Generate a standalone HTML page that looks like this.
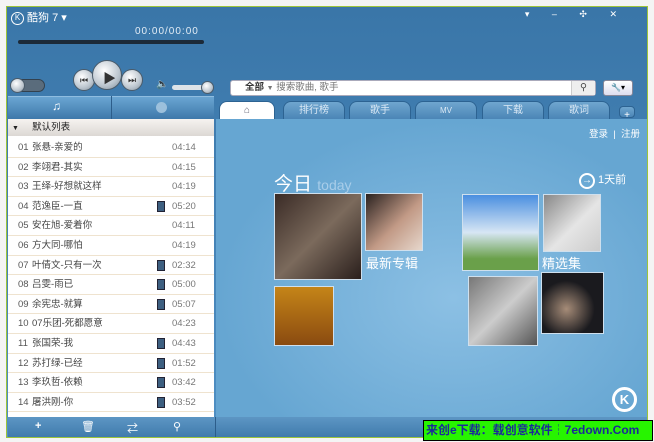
<!DOCTYPE html>
<html><head><meta charset="utf-8"><style>
*{margin:0;padding:0;box-sizing:border-box}
body{width:654px;height:442px;background:#f4f4f4;position:relative;overflow:hidden;font-family:"Liberation Sans","Noto Sans CJK SC",sans-serif;font-size:10px}
.abs{position:absolute}
#win{left:6px;top:6px;width:642px;height:432px;border:1px solid #9cc43c;background:linear-gradient(#3a76a8,#4684b8 60%,#5090c4);overflow:hidden}
.list{left:1px;top:112px;width:206px;height:298px;background:#fff}
.row{position:absolute;left:0;width:206px;height:19.6px;border-bottom:1px solid #efe3cf;color:#444;font-size:9.5px;line-height:19px}
.row .n{position:absolute;left:10px;color:#555}
.row .t{position:absolute;left:24px}
.row .d{position:absolute;left:164px;color:#777}
.row .m{position:absolute;left:149px;top:4px;width:8px;height:11px;background:#3d5f80;border:1px solid #223}
.content{left:209px;top:112px;width:432px;height:298px;background:radial-gradient(ellipse at 55% 60%,#8cc0e4,#66a6d2 70%)}
.tab{position:absolute;top:94px;height:18px;background:linear-gradient(#6fa6cf,#4b85b6);border:1px solid #2d6392;border-bottom:none;border-radius:8px 8px 0 0;color:#dbe9f5;text-align:center;line-height:17px;font-size:10px}
.pic{position:absolute;border:1px solid #cfe0ee}
.bot{left:1px;top:410px;width:640px;height:22px;background:linear-gradient(#5d96c4,#3d78aa)}
.btn{position:absolute;border-radius:50%;background:radial-gradient(circle at 40% 35%,#fff,#bcc6cf 60%,#7e8b97);border:1px solid #4a5b6a}
.bi{position:absolute;top:413px;color:#fff;font-size:11px}
</style></head><body>
<div id="win" class="abs">
 <div class="abs" style="left:4px;top:2px;width:58px;height:16px;color:#fff;font-size:11px"><span style="display:inline-block;width:13px;height:13px;border:1.5px solid #fff;border-radius:50%;font-size:8px;text-align:center;line-height:10px;vertical-align:middle">K</span> 酷狗 7 ▾</div>
 <div class="abs" style="left:128px;top:19px;color:#e2ecf5;font-size:10px;letter-spacing:1px">00:00/00:00</div>
 <div class="abs" style="left:11px;top:33px;width:186px;height:4px;background:#1c2a38;border-radius:2px"></div>
 <div class="abs" style="right:20px;top:2px;color:#fff;font-size:9px;letter-spacing:10px">▾ – ✣ ✕</div>
 <div class="btn" style="left:66px;top:62px;width:22px;height:22px"></div>
 <div class="btn" style="left:85px;top:53px;width:30px;height:30px"></div>
 <div class="btn" style="left:114px;top:62px;width:22px;height:22px"></div>
 <div class="abs" style="left:73px;top:68px;font-size:9px;color:#333">⏮</div>
 <div class="abs" style="left:96px;top:61px;font-size:13px;color:#333">▶</div>
 <div class="abs" style="left:121px;top:68px;font-size:9px;color:#333">⏭</div>
 <div class="abs" style="left:4px;top:72px;width:34px;height:13px;border-radius:7px;background:#5a6c7c;border:1px solid #33414e"></div>
 <div class="btn" style="left:3px;top:71px;width:15px;height:15px"></div>
 <div class="abs" style="left:149px;top:72px;color:#e8eef4;font-size:10px">🔈</div>
 <div class="abs" style="left:165px;top:78px;width:34px;height:5px;border-radius:3px;background:#dde3e8"></div>
 <div class="btn" style="left:194px;top:74px;width:13px;height:13px"></div>
 <div class="abs" style="left:223px;top:73px;width:366px;height:16px;background:#fff;border:1px solid #aab;border-radius:3px;font-size:9.5px;line-height:14px;color:#777"><b style="color:#333;margin-left:14px">全部</b> <span style="font-size:7px">▼</span> 搜索歌曲, 歌手<span style="position:absolute;right:0;top:0;width:24px;height:14px;background:#eee;border-left:1px solid #ccc;text-align:center;color:#444">⚲</span></div>
 <div class="abs" style="left:596px;top:73px;width:30px;height:16px;background:linear-gradient(#fff,#dde);border:1px solid #889;border-radius:3px;font-size:8px;text-align:center;line-height:14px">🔧▾</div>
 <div class="abs" style="left:1px;top:89px;width:206px;height:23px;background:linear-gradient(#6aa5d2,#3e78aa);border-top:1px solid #8fbde0"></div>
 <div class="abs" style="left:104px;top:89px;width:1px;height:23px;background:#2c5d8a"></div>
 <div class="abs" style="left:45px;top:92px;color:#fff;font-size:12px">♫</div>
 <div class="abs" style="left:149px;top:95px;width:11px;height:11px;border-radius:50%;background:#9cc0dc"></div>
 <div class="abs" style="left:1px;top:112px;width:206px;height:17px;background:linear-gradient(#f6f3f0,#dcd8d4);font-size:9.5px;line-height:17px;color:#222;z-index:2"><span style="margin-left:4px;font-size:7px">▼</span>&nbsp;&nbsp;&nbsp;&nbsp;&nbsp;默认列表</div>
 <div class="abs list">
  <div class="row" style="top:19px"><span class="n">01</span><span class="t">张悬-亲爱的</span><span class="d">04:14</span></div>
  <div class="row" style="top:38.6px"><span class="n">02</span><span class="t">李翊君-其实</span><span class="d">04:15</span></div>
  <div class="row" style="top:58.2px"><span class="n">03</span><span class="t">王绎-好想就这样</span><span class="d">04:19</span></div>
  <div class="row" style="top:77.8px"><span class="n">04</span><span class="t">范逸臣-一直</span><span class="m"></span><span class="d">05:20</span></div>
  <div class="row" style="top:97.4px"><span class="n">05</span><span class="t">安在旭-爱着你</span><span class="d">04:11</span></div>
  <div class="row" style="top:117px"><span class="n">06</span><span class="t">方大同-哪怕</span><span class="d">04:19</span></div>
  <div class="row" style="top:136.6px"><span class="n">07</span><span class="t">叶倩文-只有一次</span><span class="m"></span><span class="d">02:32</span></div>
  <div class="row" style="top:156.2px"><span class="n">08</span><span class="t">吕雯-雨已</span><span class="m"></span><span class="d">05:00</span></div>
  <div class="row" style="top:175.8px"><span class="n">09</span><span class="t">余宪忠-就算</span><span class="m"></span><span class="d">05:07</span></div>
  <div class="row" style="top:195.4px"><span class="n">10</span><span class="t">07乐团-死都愿意</span><span class="d">04:23</span></div>
  <div class="row" style="top:215px"><span class="n">11</span><span class="t">张国荣-我</span><span class="m"></span><span class="d">04:43</span></div>
  <div class="row" style="top:234.6px"><span class="n">12</span><span class="t">苏打绿-已经</span><span class="m"></span><span class="d">01:52</span></div>
  <div class="row" style="top:254.2px"><span class="n">13</span><span class="t">李玖哲-依赖</span><span class="m"></span><span class="d">03:42</span></div>
  <div class="row" style="top:273.8px"><span class="n">14</span><span class="t">屠洪刚-你</span><span class="m"></span><span class="d">03:52</span></div>
 </div>
 <div class="abs content">
  <div class="abs" style="right:8px;top:7px;color:#fff;font-size:9.5px">登录 &nbsp;|&nbsp; 注册</div>
  <div class="abs" style="left:58px;top:50px;color:#fff;font-size:19px">今日 <span style="font-size:14px;color:#a8cde9">today</span></div>
  <div class="abs" style="left:363px;top:52px;color:#fff;font-size:11px"><span style="display:inline-block;width:16px;height:16px;border:2px solid #fff;border-radius:50%;text-align:center;line-height:12px;font-size:10px">→</span> 1天前</div>
  <div class="pic" style="left:58px;top:74px;width:88px;height:87px;background:linear-gradient(135deg,#3a2b26,#7b6a5c 50%,#2a1f1c)"></div>
  <div class="pic" style="left:149px;top:74px;width:58px;height:58px;background:linear-gradient(135deg,#2a2220,#c29a86 55%,#e6d7cc)"></div>
  <div class="abs" style="left:150px;top:134px;color:#fff;font-size:13px">最新专辑</div>
  <div class="pic" style="left:58px;top:167px;width:60px;height:60px;background:linear-gradient(#c58518,#8a4b10)"></div>
  <div class="pic" style="left:246px;top:75px;width:77px;height:77px;background:linear-gradient(#4a8fe0,#d7e6f4 50%,#6aa04a 85%)"></div>
  <div class="pic" style="left:327px;top:75px;width:58px;height:58px;background:linear-gradient(135deg,#888,#e5e5e5 55%,#ccc)"></div>
  <div class="abs" style="left:326px;top:134px;color:#fff;font-size:13px">精选集</div>
  <div class="pic" style="left:252px;top:157px;width:70px;height:70px;background:linear-gradient(135deg,#777,#ccc 50%,#555)"></div>
  <div class="pic" style="left:325px;top:153px;width:63px;height:62px;background:radial-gradient(circle at 40% 60%,#a68c78,#1a1a1e 55%)"></div>
  <div class="abs" style="left:396px;top:268px;width:25px;height:25px;border:3px solid #fff;border-radius:50%;color:#fff;font-size:13px;text-align:center;line-height:19px;font-weight:bold">K</div>
 </div>
 <div class="tab" style="left:212px;width:56px;background:#fff;color:#667">⌂</div>
 <div class="tab" style="left:276px;width:62px">排行榜</div>
 <div class="tab" style="left:342px;width:62px">歌手</div>
 <div class="tab" style="left:408px;width:62px;font-size:8px">MV</div>
 <div class="tab" style="left:475px;width:62px">下载</div>
 <div class="tab" style="left:541px;width:62px">歌词</div>
 <div class="tab" style="left:612px;width:16px;height:12px;top:99px;border-radius:4px;border:1px solid #2d6392;color:#fff">+</div>
 <div class="abs bot"></div>
 <div class="abs" style="left:208px;top:410px;width:1px;height:22px;background:#2c5d8a"></div>
 <div class="bi" style="left:28px;font-weight:bold">+</div>
 <div class="bi" style="left:74px">🗑</div>
 <div class="bi" style="left:120px">⇄</div>
 <div class="bi" style="left:166px">⚲</div>
</div>
<div class="abs" style="left:423px;top:420px;width:230px;height:21px;background:#27f400;border:1px solid #000;color:#1a2a9a;font-size:12px;font-weight:bold;line-height:19px;white-space:nowrap;padding-left:2px">来创e下载：载创意软件┆7edown.Com</div>
</body></html>
